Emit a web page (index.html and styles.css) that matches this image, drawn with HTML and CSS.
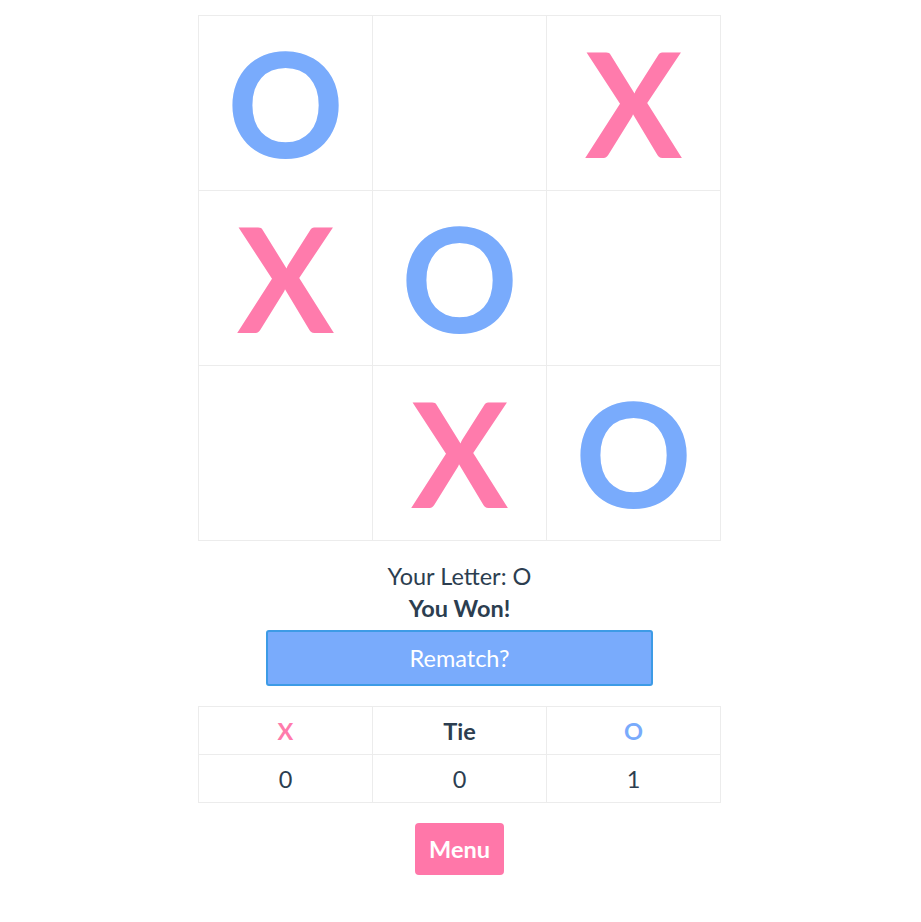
FILE: index.html
```html
<!DOCTYPE html>
<html>
<head>
<meta charset="utf-8">
<link rel="stylesheet" href="styles.css">
</head>
<body>
<div class="app">
  <div class="board">
    <div class="cell o">O</div>
    <div class="cell"></div>
    <div class="cell x">X</div>
    <div class="cell x">X</div>
    <div class="cell o">O</div>
    <div class="cell"></div>
    <div class="cell"></div>
    <div class="cell x">X</div>
    <div class="cell o">O</div>
  </div>
  <div class="status">
    <div class="letter">Your Letter: O</div>
    <div class="result">You Won!</div>
  </div>
  <button class="rematch">Rematch?</button>
  <div class="score">
    <div class="sc head px">X</div>
    <div class="sc head">Tie</div>
    <div class="sc head po">O</div>
    <div class="sc">0</div>
    <div class="sc">0</div>
    <div class="sc">1</div>
  </div>
  <div class="menu-wrap"><button class="menu">Menu</button></div>
</div>
</body>
</html>
```

FILE: styles.css
```css
html, body {
  margin: 0;
  padding: 0;
  background: #fff;
}
body {
  font-family: Lato, "Noto Sans", sans-serif;
  color: #2c3e50;
  padding-right: 2px;
}
.app {
  width: 523px;
  margin: 0 auto;
  padding-top: 15px;
  display: flex;
  flex-direction: column;
  align-items: center;
}
.board {
  display: grid;
  grid-template-columns: repeat(3, 174px);
  grid-auto-rows: 175px;
  border-top: 1px solid #ececec;
  border-left: 1px solid #ececec;
}
.cell {
  border-right: 1px solid #ececec;
  border-bottom: 1px solid #ececec;
  display: flex;
  align-items: center;
  justify-content: center;
  font-size: 145px;
  font-weight: 700;
  line-height: 1;
  padding-bottom: 2px;
}
.x { color: #ff7bac; }
.o { color: #79abfc; }
.status {
  margin-top: 19px;
  text-align: center;
  font-size: 23.5px;
  line-height: 32px;
}
.result { font-weight: 700; }
.rematch {
  margin-top: 6px;
  width: 387px;
  height: 56px;
  background: #79abfc;
  border: 2px solid #3d9be6;
  border-radius: 3px;
  color: #fff;
  font-family: inherit;
  font-size: 23.5px;
}
.score {
  margin-top: 20px;
  display: grid;
  grid-template-columns: repeat(3, 174px);
  grid-auto-rows: 48px;
  border-top: 1px solid #ececec;
  border-left: 1px solid #ececec;
}
.sc {
  border-right: 1px solid #ececec;
  border-bottom: 1px solid #ececec;
  display: flex;
  align-items: center;
  justify-content: center;
  font-size: 23.5px;
}
.head { font-weight: 700; }
.px { color: #ff7bac; }
.po { color: #79abfc; }
.menu-wrap {
  margin-top: 20px;
}
.menu {
  width: 89px;
  height: 52px;
  background: #ff77a9;
  border: none;
  border-radius: 4px;
  color: #fff;
  font-family: inherit;
  font-weight: 700;
  font-size: 23.5px;
}
```
